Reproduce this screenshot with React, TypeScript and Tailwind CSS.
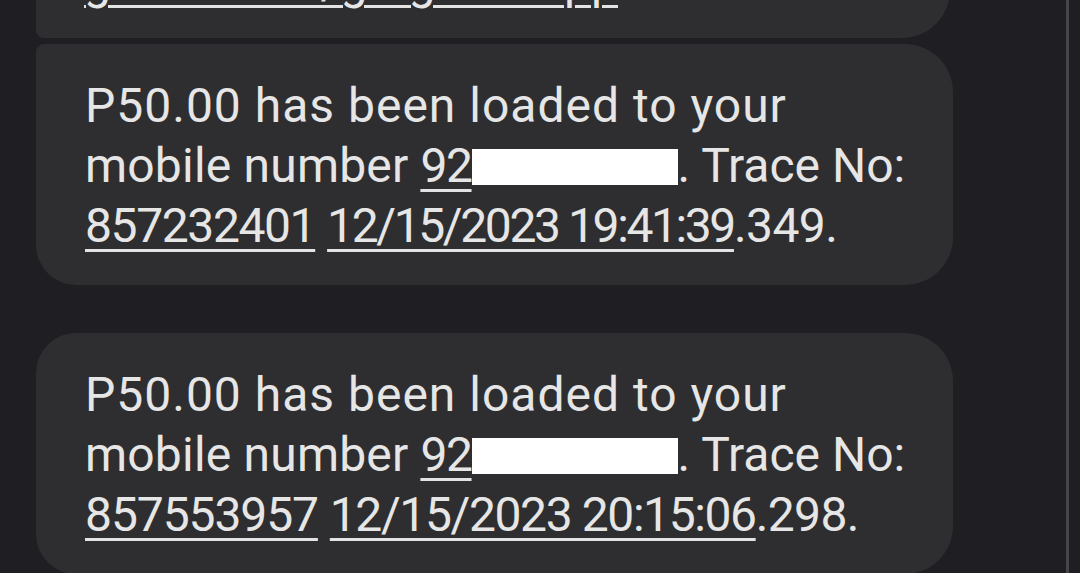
import React from 'react';

type Msg = {
  id: string;
  amount: string;
  phonePrefix: string;
  trace: string;
  stamp: string;
  millis: string;
  traceTrack: string;
  stampTrack: string;
};

const MESSAGES: Msg[] = [
  {
    id: 'a', amount: 'P50.00', phonePrefix: '92', trace: '857232401', stamp: '12/15/2023 19:41:39', millis: '.349',
    traceTrack: 'tracking-[-1.4px]', stampTrack: 'tracking-[-2.4px]',
  },
  {
    id: 'b', amount: 'P50.00', phonePrefix: '92', trace: '857553957', stamp: '12/15/2023 20:15:06', millis: '.298',
    traceTrack: 'tracking-[-1.1px]', stampTrack: 'tracking-[-1.4px]',
  },
];

const link = 'underline decoration-[3px] underline-offset-[7px] decoration-[#e3e3e3]';

const LoadBubble: React.FC<{ msg: Msg; className: string }> = ({ msg, className }) => (
  <div className={`w-[917px] bg-[#2e2e30] pl-[49px] pr-6 pt-8 pb-[29px] ${className}`}>
    <p className="text-[48px] leading-[60px] text-[#e6e6e6] whitespace-nowrap">
      <span className="tracking-[1px]">{msg.amount} has been loaded to your</span>
      <br />
      <span className="tracking-[0.2px]">mobile number</span>{' '}
      <span className={link}>
        <span className="tracking-[-1.4px]">{msg.phonePrefix}</span>
        <span className="inline-block w-[206px] h-[36px] bg-white align-[-3px]"></span>
      </span>
      . Trace No:
      <br />
      <span className={`${link} ${msg.traceTrack}`}>{msg.trace}</span>{' '}
      <span className={`${link} ${msg.stampTrack}`}>{msg.stamp}</span>
      <span className="tracking-[-0.6px]">{msg.millis}.</span>
    </p>
  </div>
);

const App: React.FC = () => {
  return (
    <div
      className="w-[1080px] h-[573px] overflow-hidden bg-[#1f1f23] flex"
      style={{ fontFamily: 'Roboto, "Noto Sans", sans-serif' }}
    >
      <div className="flex-1 flex flex-col pl-9">
        {/* tail of the previous message, scrolled mostly out of view */}
        <div className="w-[914px] -mt-20 bg-[#2e2e30] pl-12 pt-8 pb-[26px] rounded-tr-[48px] rounded-br-[48px] rounded-bl-[8px]">
          <p className="text-[48px] leading-[60px] text-[#e6e6e6] whitespace-nowrap">
            <span className={link}>gcash.com/getgcashapp</span>
          </p>
        </div>

        <LoadBubble msg={MESSAGES[0]} className="mt-1.5 rounded-tl-[8px] rounded-tr-[48px] rounded-br-[48px] rounded-bl-[40px]" />
        <LoadBubble msg={MESSAGES[1]} className="mt-12 rounded-tl-[40px] rounded-tr-[48px] rounded-br-[48px] rounded-bl-[40px]" />
      </div>

      {/* scrollbar track */}
      <div className="w-[3px] bg-[#45454a] mr-[11px]"></div>
    </div>
  );
};

export default App;
